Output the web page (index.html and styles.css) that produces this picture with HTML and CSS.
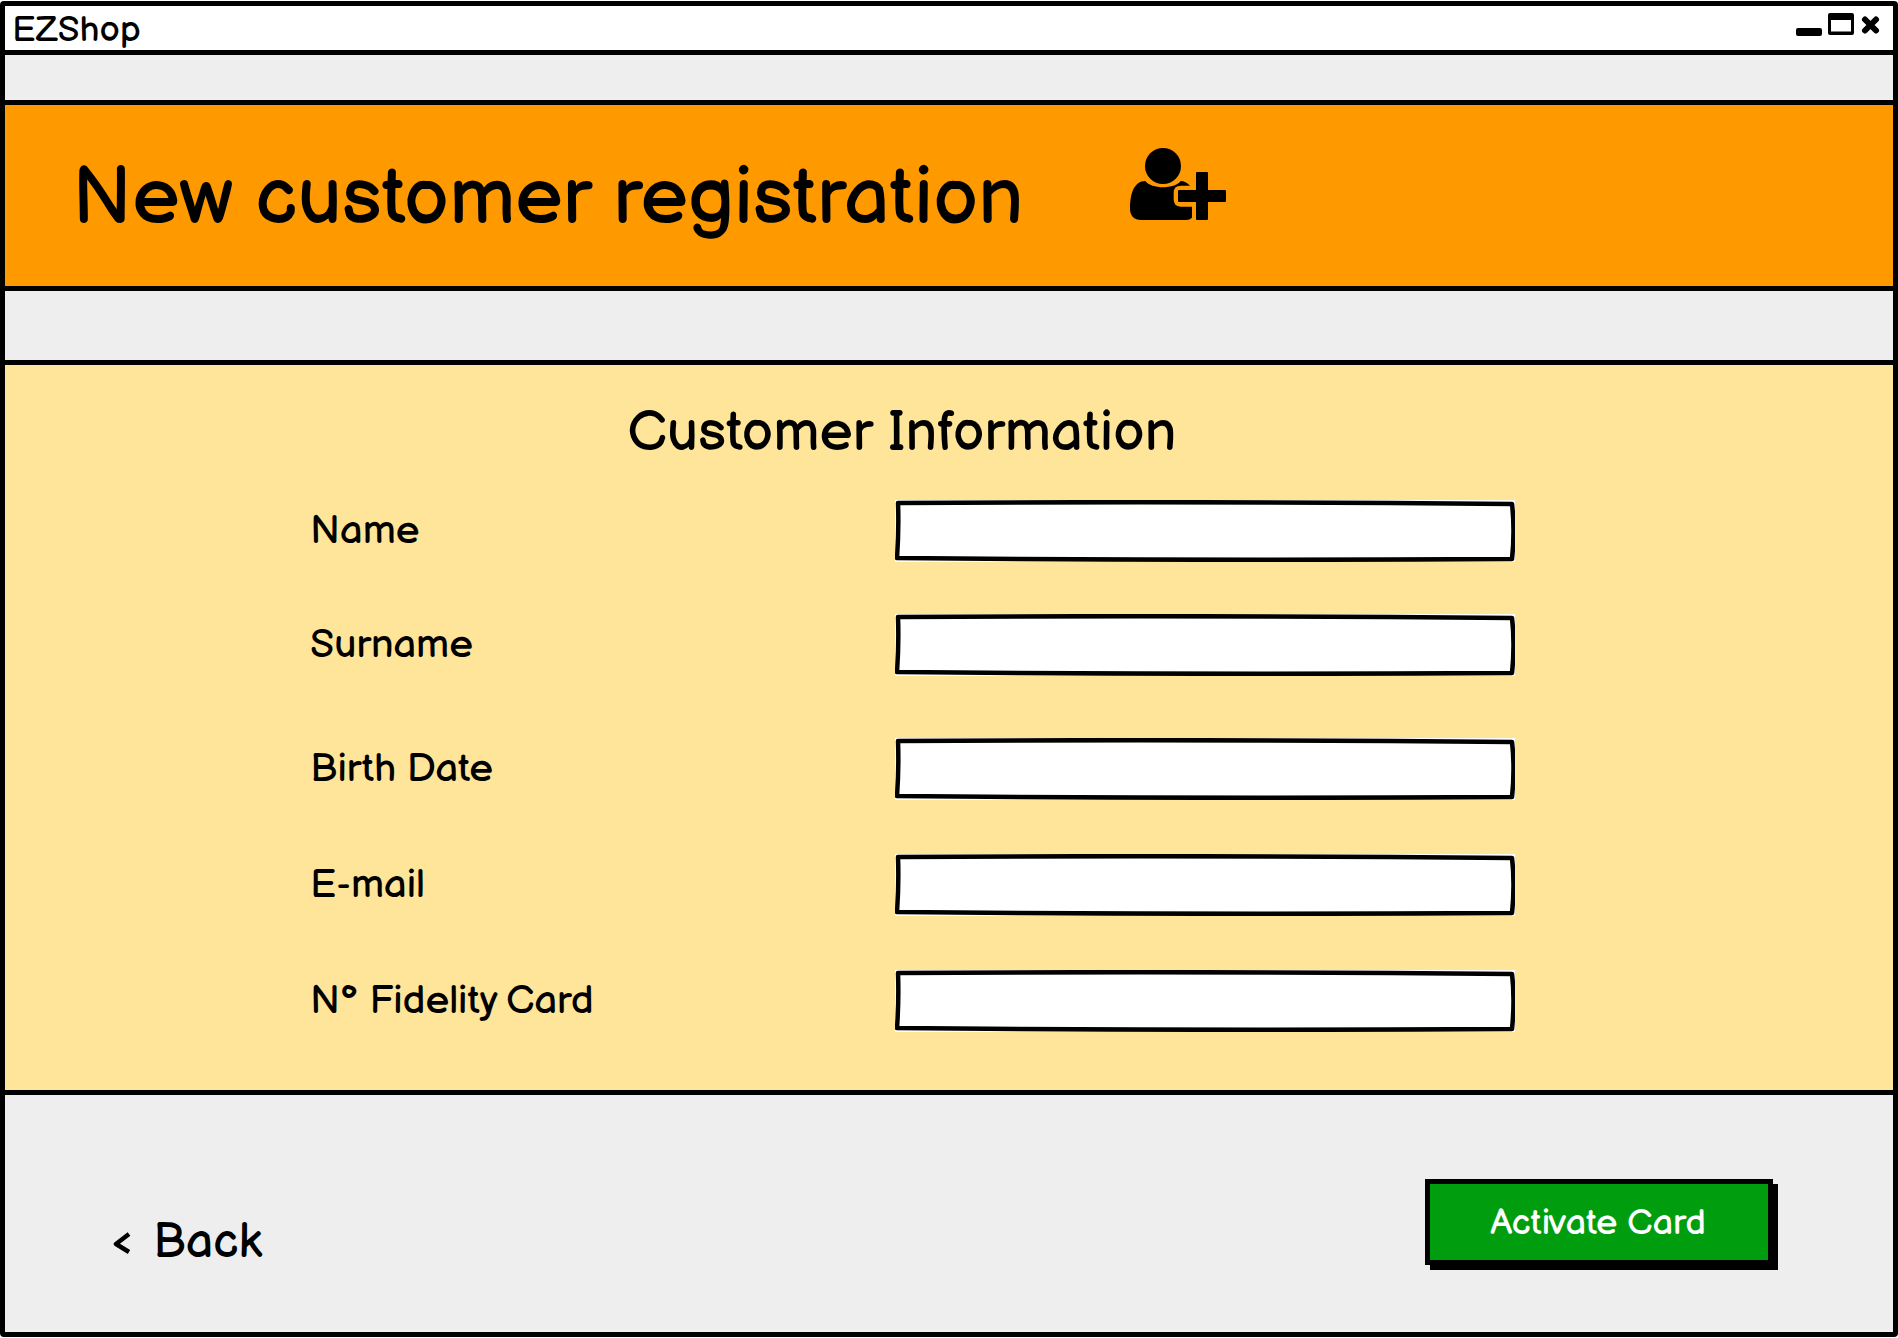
FILE: index.html
```html
<!DOCTYPE html>
<html lang="en">
<head>
<meta charset="utf-8">
<title>EZShop</title>
<link rel="stylesheet" href="styles.css">
</head>
<body>
<div class="window">
  <header class="titlebar">
    <span class="titlebar-name">EZShop</span>
    <div class="window-controls">
      <button class="control" type="button" aria-label="Minimize">
        <svg width="26" height="24" viewBox="0 0 26 24"><rect x="0" y="16" width="26" height="8" rx="2"/></svg>
      </button>
      <button class="control" type="button" aria-label="Maximize">
        <svg width="26" height="24" viewBox="0 0 26 24"><path fill-rule="evenodd" d="M2 1H24Q26 1 26 3V21Q26 23 24 23H2Q0 23 0 21V3Q0 1 2 1ZM3 8V19.500H23V8Z"/></svg>
      </button>
      <button class="control" type="button" aria-label="Close">
        <svg width="22" height="24" viewBox="0 0 22 24"><path d="M5 7.500L16 18.500M16 7.500L5 18.500" fill="none" stroke="#000" stroke-width="6" stroke-linecap="round"/></svg>
      </button>
    </div>
  </header>
  <div class="banner">
    <h1 class="banner-title">New customer registration</h1>
    <svg class="banner-icon" viewBox="0 0 288 216" aria-hidden="true">
      <circle cx="99" cy="54" r="54"/>
      <path d="M46 99C64 124 134 124 152 99C162 99 172 104 180 113H152Q131 113 131 134V154Q131 176 152 176H186V209Q180 216 168 216H34Q0 214 0 182C0 138 12 99 46 99Z"/>
      <path d="M201 72H231Q234 72 234 75V126H285Q288 126 288 129V159Q288 162 285 162H234V213Q234 216 231 216H201Q198 216 198 213V162H147Q144 162 144 159V129Q144 126 147 126H198V75Q198 72 201 72Z"/>
    </svg>
  </div>
  <main class="panel">
    <h2 class="panel-title">Customer Information</h2>
    <form class="form" id="customer">
      <div class="group group-name">
        <div class="row"><label for="name">Name</label><input id="name" type="text"></div>
        <div class="row"><label for="surname">Surname</label><input id="surname" type="text"></div>
      </div>
      <div class="group">
        <div class="row"><label for="birth">Birth Date</label><input id="birth" type="text"></div>
        <div class="row"><label for="email">E-mail</label><input id="email" type="email"></div>
        <div class="row"><label for="card">N° Fidelity Card</label><input id="card" type="text"></div>
      </div>
    </form>
  </main>
  <footer class="footer">
    <a class="back" href="#">
      <svg width="18" height="24" viewBox="0 0 18 24" aria-hidden="true"><path d="M16 3L3 13L16 21" fill="none" stroke="#000" stroke-width="4.500" stroke-linejoin="round"/></svg>
      Back
    </a>
    <button class="activate" type="submit" form="customer">Activate Card</button>
  </footer>
</div>
</body>
</html>
```
FILE: styles.css
```css
* {
  box-sizing: border-box;
}

body {
  margin: 0;
  background: #fff;
  color: #000;
  font-family: "Balsamiq Sans", Lato, sans-serif;
}

.window {
  display: flex;
  flex-direction: column;
  min-height: calc(100vh - 2px);
  margin-top: 1px;
  border: 5px solid #000;
  border-radius: 4px;
  background: #eee;
}

.titlebar {
  display: flex;
  justify-content: space-between;
  align-items: center;
  height: 49px;
  padding: 6px 11px 0 7px;
  border-bottom: 5px solid #000;
  background: #fff;
  font-size: 36px;
  line-height: 40px;
}

.window-controls {
  display: flex;
  gap: 6px;
  padding-bottom: 14px;
}

.control {
  display: flex;
  padding: 0;
  border: 0;
  background: none;
}

.banner {
  display: flex;
  align-items: center;
  gap: 107px;
  height: 191px;
  margin-top: 45px;
  padding: 6px 67px 0;
  border-top: 5px solid #000;
  border-bottom: 5px solid #000;
  background: #ff9900;
}

.banner-title {
  margin: 0;
  font-size: 80px;
  font-weight: 400;
  line-height: 96px;
}

.banner-icon {
  width: 96px;
  height: 72px;
  margin-bottom: 30px;
}

.panel {
  margin-top: 69px;
  padding: 37px 0 58px;
  border-top: 5px solid #000;
  border-bottom: 5px solid #000;
  background: #ffe599;
}

.panel-title {
  width: 95%;
  margin: 0 0 34px;
  font-size: 56px;
  font-weight: 400;
  line-height: 64px;
  text-align: center;
}

.form {
  display: flex;
  flex-direction: column;
  gap: 62px;
  padding: 0 20% 0 305px;
}

.group {
  display: flex;
  flex-direction: column;
  gap: 54px;
}

.group-name {
  gap: 52px;
}

.row {
  display: grid;
  grid-template-columns: 585fr 621fr;
  align-items: center;
  font-size: 40px;
  line-height: 48px;
}

/* The hand-drawn outline stretches with the field. */
.row input {
  width: 100%;
  height: 62px;
  padding: 4px 16px;
  border: 0;
  background: #fff url("data:image/svg+xml,%3Csvg xmlns='http://www.w3.org/2000/svg' viewBox='0 0 620 62' preserveAspectRatio='none'%3E%3Cpath d='M3 3Q300 1 617 4Q620 30 617 59Q300 61 2 58Q4 30 3 3Z' fill='none' stroke='black' stroke-width='4.500' stroke-linejoin='round'/%3E%3C/svg%3E") 0 0 / 100% 100% no-repeat;
  font: inherit;
}

.footer {
  display: flex;
  flex: 1;
  justify-content: space-between;
  align-items: center;
  padding: 16px 120px 0 108px;
}

.back {
  display: flex;
  align-items: center;
  gap: 22px;
  padding-top: 42px;
  color: inherit;
  font-size: 48px;
  line-height: 58px;
  text-decoration: none;
}

.activate {
  padding: 18px 62px 14px 60px;
  border: 5px solid #000;
  background: #009e0f;
  box-shadow: 5px 5px 0 #000;
  color: #fff;
  font: inherit;
  font-size: 36px;
  line-height: 44px;
}
```
